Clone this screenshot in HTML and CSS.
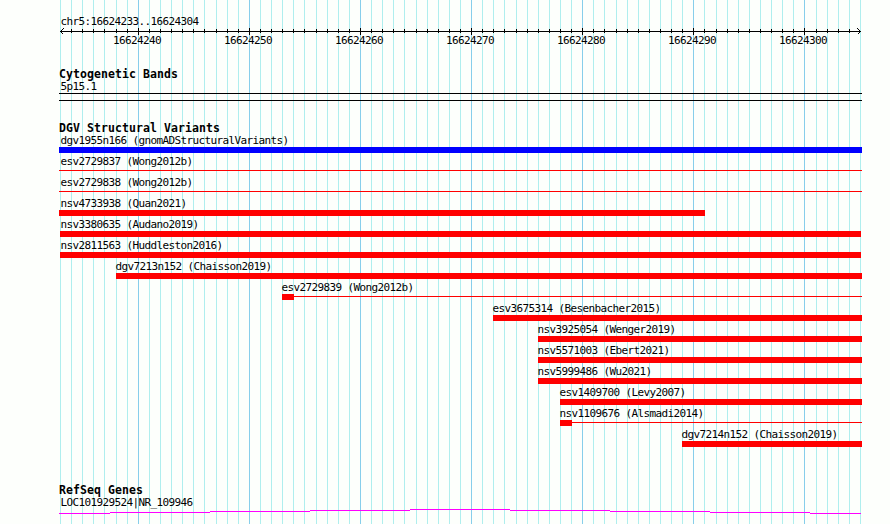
FILE: index.html
```
<!DOCTYPE html>
<html lang="en">
<head>
    <meta charset="UTF-8">
    <title>chr5:16624233..16624304</title>
    <link rel="stylesheet" href="styles.css">
</head>
<body>
    <div class="browser">
        <svg class="grid" id="grid" width="890" height="524"></svg>
        <div class="tracks">
            <div class="ruler">
                <div class="region">chr5:16624233..16624304</div>
                <svg class="axis" id="axis" width="803" height="7">
                    <path d="M1 3.5H802M4.5 0.5L1.5 3.5L4.5 6.5M798.5 0.5L801.5 3.5L798.5 6.5"/>
                </svg>
                <div class="positions">
                    <span>16624240</span>
                    <span>16624250</span>
                    <span>16624260</span>
                    <span>16624270</span>
                    <span>16624280</span>
                    <span>16624290</span>
                    <span>16624300</span>
                </div>
            </div>
            <section class="track cytobands">
                <h2>Cytogenetic Bands</h2>
                <div class="label">5p15.1</div>
                <div class="band"></div>
            </section>
            <section class="track variants">
                <h2>DGV Structural Variants</h2>
                <div id="variants"></div>
            </section>
            <section class="track genes">
                <h2>RefSeq Genes</h2>
                <div class="label">LOC101929524|NR_109946</div>
                <svg class="gene" width="803" height="5">
                    <path d="M0 4.5H51M51 3.5H151M151 2.5H251M251 1.5H351M351 0.5H451M451 1.5H551M551 2.5H651M651 3.5H751M751 4.5H802"/>
                </svg>
            </section>
        </div>
    </div>
    <script src="script.js"></script>
</body>
</html>
```
FILE: styles.css
```
body {
    margin: 0;
    background: #fdfffc;
    color: #000;
    font-family: "DejaVu Sans Mono", monospace;
    font-size: 11px;
    letter-spacing: -0.622px;
}
.browser {
    position: relative;
    width: 890px;
    height: 524px;
    overflow: hidden;
}
.grid {
    position: absolute;
    top: 0;
    left: 0;
}
svg {
    display: block;
    fill: none;
    stroke-width: 1;
    shape-rendering: crispEdges;
}
.minor {
    stroke: #afeeee;
}
.major {
    stroke: #87ceeb;
}
.tracks {
    position: relative;
    width: 803px;
    padding: 15px 0 0 59px;
    white-space: nowrap;
}
.region,
.label {
    height: 12px;
    line-height: 14px;
    padding-left: 1px;
    text-indent: 0.4px;
}
.region {
    height: 13px;
}
.axis {
    stroke: #000;
}
.positions {
    display: flex;
    gap: 63px;
    height: 12px;
    line-height: 12px;
    padding-left: 54px;
}
.positions span {
    width: 48px;
}
.track h2 {
    margin: 0;
    height: 12px;
    line-height: 12px;
    font-size: 11.5px;
    font-weight: bold;
    letter-spacing: 0.077px;
}
.cytobands {
    padding-top: 21px;
}
.band {
    height: 6px;
    margin-top: 1px;
    border-top: 1px solid #000;
    border-bottom: 1px solid #000;
}
.variants {
    padding-top: 21px;
}
.variant {
    height: 21px;
}
.variant .label {
    height: 13px;
}
.bar {
    display: flex;
    align-items: center;
    height: 6px;
}
.box {
    height: 6px;
    background: #f00;
}
.box.blue {
    background: #00f;
}
.line {
    flex: 1;
    height: 1px;
    margin-bottom: 1px;
    background: #f00;
}
.genes {
    padding-top: 35px;
}
.gene {
    margin-top: 1px;
    stroke: #f0f;
}
```
FILE: script.js
```
// left edge of the tracks and pixels per base
const LEFT = 59;
const SCALE = 11.1111;
const NS = 'http://www.w3.org/2000/svg';

function addLine(parent, x, y1, y2, cls) {
    const line = document.createElementNS(NS, 'line');
    line.setAttribute('x1', x + 0.5);
    line.setAttribute('x2', x + 0.5);
    line.setAttribute('y1', y1);
    line.setAttribute('y2', y2);
    if (cls) line.setAttribute('class', cls);
    parent.appendChild(line);
}

const grid = document.getElementById('grid');
const axis = document.getElementById('axis');
for (let i = 0; i <= 72; i++) {
    const x = Math.floor(60.52 + i * SCALE);
    const major = i % 10 === 7;
    addLine(grid, x, 0, 524, major ? 'major' : 'minor');
    if (i > 0 && i < 72) {
        addLine(axis, x - LEFT, major ? 0 : 1, major ? 7 : 5);
    }
}

// name, box start, box end, end of the thin line, label start
const variants = [
    ['dgv1955n166 (gnomADStructuralVariants)', 59, 862, 0, 60, 'blue'],
    ['esv2729837 (Wong2012b)', 59, 59, 862, 60],
    ['esv2729838 (Wong2012b)', 59, 59, 862, 60],
    ['nsv4733938 (Quan2021)', 59, 705, 0, 60],
    ['nsv3380635 (Audano2019)', 60, 861, 0, 60],
    ['nsv2811563 (Huddleston2016)', 60, 861, 0, 60],
    ['dgv7213n152 (Chaisson2019)', 116, 862, 0, 115],
    ['esv2729839 (Wong2012b)', 282, 294, 862, 281],
    ['esv3675314 (Besenbacher2015)', 493, 862, 0, 492],
    ['nsv3925054 (Wenger2019)', 538, 862, 0, 537],
    ['nsv5571003 (Ebert2021)', 538, 862, 0, 537],
    ['nsv5999486 (Wu2021)', 538, 862, 0, 537],
    ['esv1409700 (Levy2007)', 560, 862, 0, 559],
    ['nsv1109676 (Alsmadi2014)', 560, 572, 862, 559],
    ['dgv7214n152 (Chaisson2019)', 682, 862, 0, 681]
];

document.getElementById('variants').innerHTML = variants.map(function(v) {
    const [name, start, end, lineEnd, labelStart, color] = v;
    return `<div class="variant">
        <div class="label" style="padding-left: ${labelStart - LEFT}px">${name}</div>
        <div class="bar" style="margin-left: ${start - LEFT}px">
            <div class="box ${color || ''}" style="width: ${end - start}px"></div>
            ${lineEnd ? '<div class="line"></div>' : ''}
        </div>
    </div>`;
}).join('');
```
